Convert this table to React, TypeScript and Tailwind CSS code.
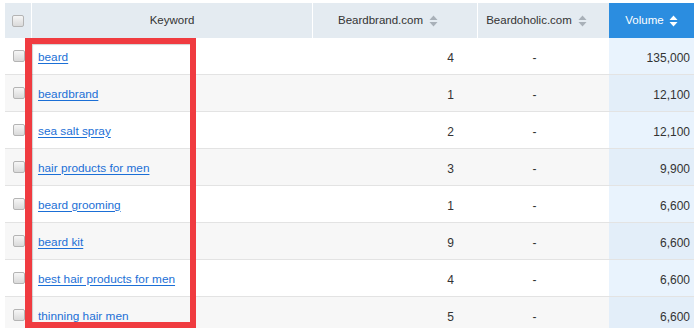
import React from 'react';

const rows = [
  { keyword: 'beard', brand: '4', holic: '-', volume: '135,000' },
  { keyword: 'beardbrand', brand: '1', holic: '-', volume: '12,100' },
  { keyword: 'sea salt spray', brand: '2', holic: '-', volume: '12,100' },
  { keyword: 'hair products for men', brand: '3', holic: '-', volume: '9,900' },
  { keyword: 'beard grooming', brand: '1', holic: '-', volume: '6,600' },
  { keyword: 'beard kit', brand: '9', holic: '-', volume: '6,600' },
  { keyword: 'best hair products for men', brand: '4', holic: '-', volume: '6,600' },
  { keyword: 'thinning hair men', brand: '5', holic: '-', volume: '6,600' },
];

const SortIcon = ({ className = 'text-[#a8b0b8]' }: { className?: string }) => (
  <svg className={className} width="9" height="12" viewBox="0 0 9 12" fill="currentColor">
    <path d="M4.5 0.5L8.5 5H0.5z" />
    <path d="M4.5 11.5L8.5 7H0.5z" />
  </svg>
);

const Checkbox = () => (
  <span className="block w-[12px] h-[12px] rounded-[2px] border border-[#b4b4b4] bg-gradient-to-b from-[#f6f6f6] to-[#dadada]" />
);

export default function App() {
  return (
    <div className="relative w-[700px] h-[328px] overflow-hidden bg-white pt-[3px] pl-[5px] font-['Liberation_Sans',Arial,sans-serif] text-[#333]">
      <div className="w-[689px]">
        {/* Header */}
        <div className="flex h-[35px] text-[11.5px] text-[#333]">
          <div className="w-[27px] flex items-center justify-center bg-[#e4ebf1] border-r border-white">
            <Checkbox />
          </div>
          <div className="w-[281px] flex items-center justify-center bg-[#e4ebf1] border-r border-white">
            Keyword
          </div>
          <div className="w-[165px] flex items-center justify-center gap-[6px] pr-[14px] bg-[#e4ebf1] border-r border-white">
            Beardbrand.com <SortIcon />
          </div>
          <div className="w-[131px] flex items-center justify-center gap-[6px] pr-[14px] bg-[#e4ebf1]">
            Beardoholic.com <SortIcon />
          </div>
          <div className="w-[85px] flex items-center justify-center gap-[5px] bg-[#2b8de0] text-white">
            Volume <SortIcon className="text-white" />
          </div>
        </div>

        {/* Rows */}
        {rows.map((row, i) => (
          <div
            key={row.keyword}
            className={`flex h-[37px] border-b border-[#e3e3e3] text-[12px] ${i % 2 === 1 ? 'bg-[#f7f7f7]' : 'bg-white'}`}
          >
            <div className="w-[27px] flex items-center justify-center">
              <Checkbox />
            </div>
            <div className="w-[281px] flex items-center pl-[6px] pt-[3px]">
              <a href="#" className="text-[#1b6fd6] underline underline-offset-2 text-[11.8px]">
                {row.keyword}
              </a>
            </div>
            <div className="w-[165px] flex items-center justify-end pr-[24px] pt-[3px]">{row.brand}</div>
            <div className="w-[131px] flex items-center justify-center pr-[18px] pt-[3px]">{row.holic}</div>
            <div
              className={`w-[85px] flex items-center justify-end pr-[4px] pt-[3px] ${i % 2 === 1 ? 'bg-[#e3eef9]' : 'bg-[#e9f3fd]'}`}
            >
              {row.volume}
            </div>
          </div>
        ))}
      </div>

      {/* Highlight annotation */}
      <div className="absolute left-[25px] top-[38px] w-[171px] h-[290px] border-[6px] border-l-[7px] border-[#f03b40] shadow-[inset_1px_1px_1px_rgba(0,0,0,0.18)]" />
    </div>
  );
}
